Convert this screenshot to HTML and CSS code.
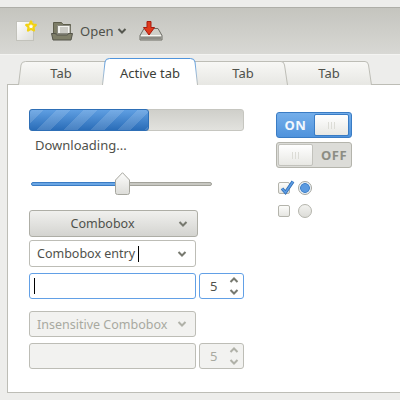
FILE: index.html
```html
<!DOCTYPE html>
<html>
<head>
    <title>Widget Factory</title>
    <link rel="stylesheet" href="styles.css">
</head>
<body>
    <div class="toolbar">
        <button class="tool-btn new-btn">
            <svg width="22" height="22" viewBox="0 0 22 22">
                <defs>
                    <linearGradient id="docgrad" x1="0" y1="0" x2="1" y2="1">
                        <stop offset="0" stop-color="#fff"/>
                        <stop offset="1" stop-color="#dcdcd8"/>
                    </linearGradient>
                </defs>
                <rect x="1.5" y="1.5" width="17" height="19" fill="url(#docgrad)" stroke="#c2c2bb"/>
                <path d="M16 1.5l1.5 3 3.300.4-2.400 2.300.6 3.300-3-1.600-3 1.600.6-3.300-2.400-2.300 3.300-.4z" fill="#fff" stroke="#f2d214" stroke-width="2.200" stroke-linejoin="round"/>
            </svg>
        </button>
        <button class="tool-btn open-btn">
            <svg width="22" height="20" viewBox="0 0 22 20">
                <path d="M2.500 13V1.500h8l1.500 2h7.500v9.500z" fill="#7c7c66" stroke="#5c5c4a"/>
                <path d="M6.500 4.500h12.500v8h-12.500z" fill="#f4f4f0" stroke="#8a8a80"/>
                <path d="M9 7h8M9 9h8M9 11h8" stroke="#a2a29a" fill="none"/>
                <path d="M.5 12.500h4l1 1.500h11l1-1.500h4l-1.500 6.500h-18z" fill="#7e7e68" stroke="#54544a" stroke-linejoin="round"/>
            </svg>
            <span>Open</span>
            <svg class="arrow" width="10" height="6" viewBox="0 0 10 6"><path d="M1.500 1l3.500 3.500 3.500-3.500" fill="none" stroke="#55574f" stroke-width="2"/></svg>
        </button>
        <button class="tool-btn save-btn">
            <svg width="24" height="20" viewBox="0 0 24 20">
                <path d="M1 14.500l4-7h14l4 7v4.500h-22z" fill="#cfcfc9" stroke="#6e6e66" stroke-linejoin="round"/>
                <path d="M2 14h20v1.500h-20z" fill="#f6f6f2"/>
                <path d="M1.500 15.500h21v3h-21z" fill="#8c8c86"/>
                <path d="M8 .5h4v6h3.500l-5.500 7.500-5.500-7.500h3.500z" fill="#e03a1c" stroke="#a81c10" stroke-linejoin="round"/>
            </svg>
        </button>
    </div>

    <div class="notebook">
        <div class="tabs">
            <div class="tab tab-first">
                <svg class="tab-shape" width="92" height="24" viewBox="0 0 92 24">
                    <defs>
                        <linearGradient id="tabgrad" x1="0" y1="0" x2="0" y2="1">
                            <stop offset="0" stop-color="#f8f8f6"/>
                            <stop offset="1" stop-color="#e7e7e3"/>
                        </linearGradient>
                        <linearGradient id="tabstroke" x1="0" y1="0" x2="0" y2="1">
                            <stop offset="0" stop-color="#4f94dc"/>
                            <stop offset="0.5" stop-color="#8fb6dc"/>
                            <stop offset="1" stop-color="#bdbdb6"/>
                        </linearGradient>
                    </defs>
                    <path d="M.5 24L3 4Q3.500 .5 7.500 .5H92V24" fill="url(#tabgrad)" stroke="#bdbdb6"/>
                </svg>
                <span>Tab</span>
            </div>
            <div class="tab tab-active">
                <svg class="tab-shape" width="96" height="27" viewBox="0 0 96 27">
                    <path d="M.5 27L3 4Q3.500 .5 7.500 .5H88.500Q92.500 .5 93 4L95.500 27" fill="#fff" stroke="url(#tabstroke)"/>
                </svg>
                <span>Active tab</span>
            </div>
            <div class="tab tab-third">
                <svg class="tab-shape" width="98" height="24" viewBox="0 0 98 24">
                    <path d="M0 24V.5H91Q94 .5 94.500 4L97.500 24" fill="url(#tabgrad)" stroke="#bdbdb6"/>
                </svg>
                <span>Tab</span>
            </div>
            <div class="tab tab-last">
                <svg class="tab-shape" width="92" height="24" viewBox="0 0 92 24">
                    <path d="M0 24V.5H85Q88 .5 88.500 4L91.500 24" fill="url(#tabgrad)" stroke="#bdbdb6"/>
                </svg>
                <span>Tab</span>
            </div>
        </div>
        <div class="page">
            <div class="col-left">
                <div class="progress"><div class="progress-fill"></div></div>
                <div class="progress-label">Downloading...</div>

                <div class="slider">
                    <div class="slider-fill"></div>
                    <div class="slider-rest"></div>
                    <svg class="slider-thumb" width="17" height="23" viewBox="0 0 17 23">
                        <defs>
                            <linearGradient id="thumbgrad" x1="0" y1="0" x2="0" y2="1">
                                <stop offset="0" stop-color="#fdfdfc"/>
                                <stop offset="1" stop-color="#dcdcd8"/>
                            </linearGradient>
                        </defs>
                        <path d="M8.500.7l7 7.300v12.500q0 2-2 2h-10q-2 0-2-2v-12.500z" fill="url(#thumbgrad)" stroke="#a6a69e"/>
                    </svg>
                </div>

                <button class="combo combo-btn">
                    <span class="combo-text">Combobox</span>
                    <svg class="arrow" width="10" height="6" viewBox="0 0 10 6"><path d="M1.500 1l3.500 3.500 3.500-3.500" fill="none" stroke="#77796f" stroke-width="2"/></svg>
                </button>

                <div class="combo entry-combo">
                    <span>Combobox entry</span><span class="caret"></span>
                    <svg class="arrow" width="10" height="6" viewBox="0 0 10 6"><path d="M1.500 1l3.500 3.500 3.500-3.500" fill="none" stroke="#77796f" stroke-width="2"/></svg>
                </div>

                <div class="entry-row focus-row">
                    <div class="entry focused"><span class="caret"></span></div>
                    <div class="spin focused">
                        <span>5</span>
                        <svg width="10" height="20" viewBox="0 0 10 20"><path d="M1.500 6l3.500-3.500 3.500 3.500M1.500 14l3.500 3.500 3.500-3.500" fill="none" stroke="#77796f" stroke-width="2"/></svg>
                    </div>
                </div>

                <div class="combo insensitive-combo">
                    <span>Insensitive Combobox</span>
                    <svg class="arrow" width="10" height="6" viewBox="0 0 10 6"><path d="M1.500 1l3.500 3.500 3.500-3.500" fill="none" stroke="#b0b1a8" stroke-width="2"/></svg>
                </div>

                <div class="entry-row disabled-row">
                    <div class="entry disabled"></div>
                    <div class="spin disabled">
                        <span>5</span>
                        <svg width="10" height="20" viewBox="0 0 10 20"><path d="M1.500 6l3.500-3.500 3.500 3.500M1.500 14l3.500 3.500 3.500-3.500" fill="none" stroke="#b0b1a8" stroke-width="2"/></svg>
                    </div>
                </div>
            </div>

            <div class="col-right">
                <div class="switch on">
                    <span class="switch-label">ON</span>
                    <span class="switch-knob"><i></i><i></i><i></i></span>
                </div>
                <div class="switch off">
                    <span class="switch-knob"><i></i><i></i><i></i></span>
                    <span class="switch-label">OFF</span>
                </div>
                <div class="check-row first">
                    <span class="check">
                        <svg width="18" height="18" viewBox="0 0 18 18"><path d="M3 9.500l3.500 4 7.500-11" fill="none" stroke="#2f6db4" stroke-width="3.200"/><path d="M3 9.500l3.500 4 7.500-11" fill="none" stroke="#5c9ce4" stroke-width="1.600"/></svg>
                    </span>
                    <span class="radio checked"></span>
                </div>
                <div class="check-row">
                    <span class="check"></span>
                    <span class="radio"></span>
                </div>
            </div>
        </div>
    </div>
</body>
</html>
```

FILE: styles.css
```css
* {
    box-sizing: border-box;
}

html, body {
    margin: 0;
    height: 400px;
    overflow: hidden;
}

body {
    font-family: "Noto Sans", sans-serif;
    font-size: 13px;
    color: #4f514b;
    background: #ededeb;
}

button {
    font: inherit;
    color: inherit;
    padding: 0;
    border: none;
    background: none;
}

.toolbar {
    height: 55px;
    padding-left: 15px;
    display: flex;
    align-items: center;
    gap: 14px;
    background: linear-gradient(#c4c4be, #d8d8d4);
    border-top: 7px solid #ededeb;
    border-bottom: 1px solid #f4f4f2;
    box-shadow: inset 0 1px #aeaea8;
}

.tool-btn {
    display: flex;
    align-items: center;
    gap: 7px;
}

.open-btn {
    margin-right: -2px;
}

.open-btn .arrow {
    margin-left: -4px;
}

.notebook {
    padding: 6px 0 0 7px;
}

.tabs {
    display: flex;
    height: 23px;
    padding-left: 11px;
    position: relative;
    z-index: 1;
}

.tab {
    position: relative;
    flex: none;
    height: 24px;
    text-align: center;
    line-height: 24px;
}

.tab span {
    position: relative;
}

.tab-shape {
    position: absolute;
    left: 0;
    top: 0;
}

.tab-first {
    width: 92px;
    padding-right: 6px;
}

.tab-active {
    width: 96px;
    height: 27px;
    margin: -3px 0 0 -8px;
    padding-top: 3px;
    color: #3c3e38;
    z-index: 3;
}

.tab-third {
    width: 98px;
    margin-left: -8px;
    padding-left: 8px;
    z-index: 2;
}

.tab-last {
    width: 92px;
    margin-left: -8px;
    padding-left: 6px;
}

.page {
    height: 309px;
    background: #fff;
    border: 1px solid #bdbdb6;
    border-right: none;
    padding: 24px 0 0 21px;
    display: flex;
    gap: 32px;
}

.col-left {
    width: 215px;
}

.progress {
    height: 22px;
    border: 1px solid #c6c6c0;
    border-radius: 3px;
    background: linear-gradient(#cfcfca, #e2e2de);
}

.progress-fill {
    width: 120px;
    height: 22px;
    margin: -1px;
    border: 1px solid #2e6fb6;
    border-radius: 3px;
    background:
        repeating-linear-gradient(135deg, rgba(255,255,255,0.14) 0 9.5px, rgba(255,255,255,0) 9.5px 19px),
        linear-gradient(#5f9fe2, #2a6db8);
}

.progress-label {
    margin: 5px 0 0 6px;
    line-height: 18px;
}

.slider {
    display: flex;
    align-items: center;
    height: 23px;
    margin: 18px 0 0 2px;
    width: 181px;
    position: relative;
}

.slider-fill {
    width: 88px;
    height: 4px;
    border: 1px solid #3a7cc4;
    border-radius: 2px 0 0 2px;
    background: #6aa6e4;
}

.slider-rest {
    flex: 1;
    height: 4px;
    border: 1px solid #a2a29a;
    border-radius: 0 2px 2px 0;
    background: #c8c8c2;
}

.slider-thumb {
    position: absolute;
    left: 83px;
    top: 0;
}

.combo {
    display: flex;
    align-items: center;
    height: 27px;
    font-size: 12.5px;
    border-radius: 3px;
    border: 1px solid #bdbdb6;
}

.combo-btn {
    width: 169px;
    margin-top: 15px;
    padding: 0 9px;
    background: linear-gradient(#f0f0ee, #d4d4d0);
    border-color: #aeaea6;
}

.combo-text {
    flex: 1;
    text-align: center;
    padding-right: 12px;
}

.entry-combo {
    width: 167px;
    margin-top: 3px;
    padding: 0 8px 0 7px;
    background: #fff;
}

.caret {
    display: inline-block;
    width: 1px;
    height: 16px;
    margin-left: 3px;
    background: #000;
}

.entry-combo .arrow {
    margin-left: auto;
}

.entry-row {
    display: flex;
    gap: 3px;
}

.focus-row {
    margin-top: 6px;
}

.disabled-row {
    margin-top: 6px;
}

.entry {
    width: 167px;
    height: 26px;
    border-radius: 3px;
    border: 1px solid #bdbdb6;
    display: flex;
    align-items: center;
    padding-left: 1px;
}

.spin {
    width: 45px;
    height: 26px;
    border-radius: 3px;
    border: 1px solid #bdbdb6;
    display: flex;
    align-items: center;
    justify-content: space-between;
    padding: 0 4px 0 10px;
}

.focused {
    border-color: #62a0e6;
}

.disabled {
    background: #f2f2f0;
    color: #a8a9a0;
}

.insensitive-combo {
    width: 167px;
    height: 26px;
    margin-top: 12px;
    padding: 0 8px 0 7px;
    justify-content: space-between;
    background: #f2f2f0;
    color: #a8a9a0;
}

.col-right {
    padding-top: 3px;
}

.switch {
    display: flex;
    align-items: center;
    width: 76px;
    height: 26px;
    border-radius: 3px;
    font-weight: bold;
    font-size: 13px;
    letter-spacing: 0.5px;
}

.switch.on {
    background: linear-gradient(#74aeea, #5093dc);
    border: 1px solid #3a7cc4;
    color: #f2f7fd;
}

.switch.off {
    margin-top: 4px;
    background: #dcdcd8;
    border: 1px solid #b4b4ac;
    color: #8c8d84;
}

.switch-label {
    flex: 1;
    text-align: center;
}

.switch.off .switch-label {
    padding-left: 4px;
}

.switch-knob {
    width: 35px;
    height: 22px;
    display: flex;
    align-items: center;
    justify-content: center;
    gap: 2px;
    border-radius: 2px;
    border: 1px solid #c2c2bc;
    background: linear-gradient(#fff, #e8e8e4);
}

.switch.on .switch-knob {
    margin-right: 2px;
    border-color: #3a7cc4;
}

.switch.off .switch-knob {
    margin-left: 1px;
}

.switch-knob i {
    width: 1px;
    height: 7px;
    background: #dcdcd6;
}

.check-row {
    display: flex;
    align-items: center;
    gap: 8px;
    margin-top: 9px;
    padding-left: 2px;
}

.check-row.first {
    margin-top: 13px;
}

.check {
    position: relative;
    width: 12px;
    height: 12px;
    border: 1px solid #b4b4ac;
    border-radius: 2px;
    background: linear-gradient(#fcfcfa, #e6e6e2);
}

.check svg {
    position: absolute;
    left: 0;
    top: -4px;
}

.radio {
    width: 14px;
    height: 14px;
    border: 1px solid #b4b4ac;
    border-radius: 50%;
    background: linear-gradient(#f2f2ef, #dcdcd8);
}

.radio.checked {
    border-color: #a6a69e;
    background: radial-gradient(circle, #5b9ae0 0 3.5px, #3f80c8 4.5px, #e8f0f8 5.2px);
}
```
